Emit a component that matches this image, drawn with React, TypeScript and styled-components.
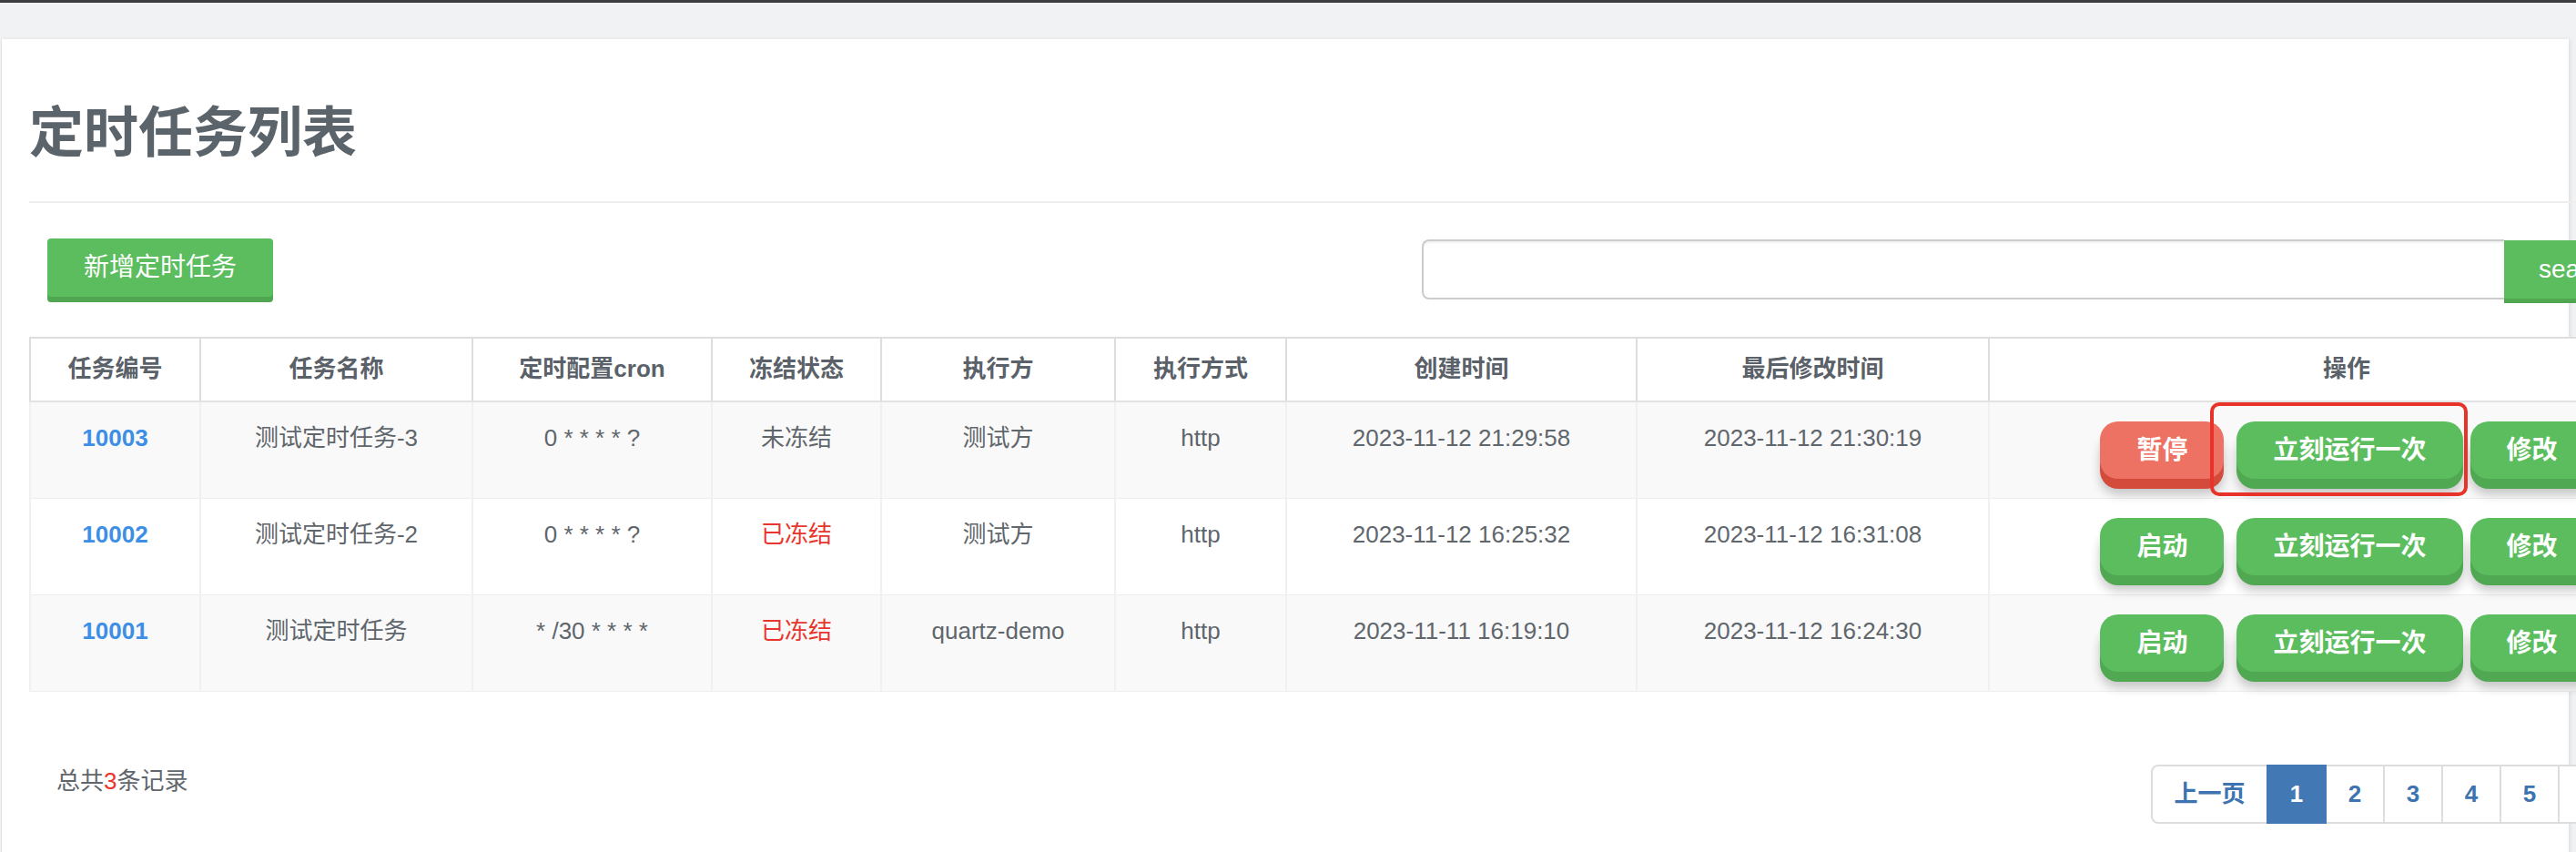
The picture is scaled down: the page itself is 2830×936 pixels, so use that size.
import React from "react";
import styled, { createGlobalStyle } from "styled-components";

const FONT = `"Liberation Sans", "Noto Sans CJK SC", sans-serif`;

const GlobalStyle = createGlobalStyle`
  html, body { margin: 0; padding: 0; overflow: hidden; background: #f1f2f4; }
  body { font-family: ${FONT}; color: #5f666c; }
  * { box-sizing: border-box; }
`;

const Page = styled.div`
  width: 2830px;
  height: 936px;
  overflow: hidden;
  background: #f1f2f4;
  border-top: 3px solid #3b3d41;
  padding: 40px 0 0 1px;
`;

const Panel = styled.div`
  width: 2821px;
  height: 900px;
  background: #fff;
  border-left: 1px solid #e2e3e5;
  box-shadow: 2px 0 4px rgba(0, 0, 0, 0.08);
  padding: 71px 0 0 30px;
`;

const Content = styled.div`
  width: 2938px;
`;

const Title = styled.h1`
  margin: 0;
  font-size: 60px;
  line-height: 66px;
  font-weight: 700;
  color: #5b646b;
`;

const Divider = styled.div`
  height: 2px;
  background: #eeeeee;
  margin-top: 41px;
`;

const Toolbar = styled.div`
  display: flex;
  align-items: flex-start;
  height: 64px;
  margin-top: 39px;
`;

const FlatButton = styled.button`
  height: 64px;
  padding: 0 40px;
  border: none;
  border-radius: 4px;
  background: #5cbd5e;
  box-shadow: 0 6px 0 #51a652;
  color: #fff;
  font: 400 28px/64px ${FONT};
  white-space: nowrap;
`;

const AddButton = styled(FlatButton)`
  margin-left: 20px;
`;

const SearchGroup = styled.div`
  display: flex;
  align-items: flex-start;
  margin-left: auto;
  margin-right: 59px;
  margin-top: 1px;
`;

const SearchInput = styled.input`
  width: 1189px;
  height: 66px;
  border: 2px solid #cccccc;
  border-right: none;
  border-radius: 8px 0 0 8px;
  box-shadow: inset 0 2px 2px rgba(0, 0, 0, 0.06);
  font: 26px ${FONT};
  padding: 0 18px;
  outline: none;
`;

const SearchButton = styled(FlatButton)`
  width: 160px;
  padding: 0;
  margin-top: 1px;
  box-shadow: 0 5px 0 #51a652;
  border-radius: 0 4px 4px 0;
`;

const Table = styled.table`
  margin-top: 44px;
  width: 2938px;
  table-layout: fixed;
  border-collapse: collapse;
  border-top: 2px solid #dddddd;
`;

const Th = styled.th`
  padding: 15px 8px 16px;
  border-left: 2px solid #dddddd;
  border-right: 2px solid #dddddd;
  border-bottom: 2px solid #e2e2e2;
  font: 700 26px/37px ${FONT};
  color: #5a6168;
  text-align: center;
  background: #fff;
`;

const Tr = styled.tr<{ $striped: boolean }>`
  background: ${(p) => (p.$striped ? "#f9f9f9" : "#ffffff")};
`;

const Td = styled.td<{ $tone?: "id" | "red" | "plain" }>`
  padding: 21px 8px 21px;
  border-left: 2px solid #f0f0f0;
  border-right: 2px solid #f0f0f0;
  border-bottom: 1px solid #eeeeee;
  vertical-align: top;
  text-align: center;
  font: ${(p) => (p.$tone === "id" ? 700 : 400)} 26px/37px ${FONT};
  color: ${(p) =>
    p.$tone === "id" ? "#3d8fe6" : p.$tone === "red" ? "#e8352d" : "#5f666c"};
  white-space: nowrap;
`;

const ActionCell = styled.td`
  padding: 21px 16px 21px;
  border-left: 2px solid #f0f0f0;
  border-bottom: 1px solid #eeeeee;
  vertical-align: top;
`;

const Actions = styled.div`
  display: flex;
  justify-content: center;
`;

const ActionButton = styled.button<{ $tone: "green" | "red"; $gap: number }>`
  height: 63px;
  padding: 0 40px;
  margin-right: ${(p) => p.$gap}px;
  border: none;
  border-radius: 20px;
  font: 700 28px/63px ${FONT};
  color: #fff;
  white-space: nowrap;
  background: ${(p) => (p.$tone === "red" ? "#ee7263" : "#5cbd5e")};
  box-shadow: 0 11px 0 ${(p) => (p.$tone === "red" ? "#d44b3b" : "#51a852")},
    0 17px 12px rgba(0, 0, 0, 0.22);
`;

const Marked = styled.span`
  position: relative;
  display: inline-flex;
  margin-right: 8px;
`;

const Annotation = styled.span`
  position: absolute;
  left: -29px;
  right: -5px;
  top: -21px;
  bottom: -19px;
  border: 4px solid #e8332a;
  border-radius: 10px;
  z-index: 3;
`;

const Footer = styled.div`
  display: flex;
  justify-content: space-between;
  align-items: flex-start;
  margin-top: 80px;
  padding: 0 31px 0 30px;
`;

const Total = styled.div`
  font: 400 26px/37px ${FONT};
  color: #5f666c;
`;

const Count = styled.span`
  color: #e8352d;
`;

const Pager = styled.div`
  display: flex;
`;

const PageCell = styled.span<{ $active?: boolean; $wide?: boolean; $first?: boolean; $last?: boolean }>`
  position: relative;
  display: block;
  width: ${(p) => (p.$wide ? 129 : 66)}px;
  height: 65px;
  margin-left: ${(p) => (p.$first ? 0 : -2)}px;
  border: 2px solid ${(p) => (p.$active ? "#4279b4" : "#dddddd")};
  border-radius: ${(p) => (p.$first ? "8px 0 0 8px" : p.$last ? "0 8px 8px 0" : "0")};
  background: ${(p) => (p.$active ? "#4279b4" : "#ffffff")};
  color: ${(p) => (p.$active ? "#ffffff" : "#3d73b0")};
  z-index: ${(p) => (p.$active ? 2 : 1)};
  font: 700 26px/61px ${FONT};
  text-align: center;
`;

const columns = [
  { title: "任务编号", width: 187 },
  { title: "任务名称", width: 299 },
  { title: "定时配置cron", width: 263 },
  { title: "冻结状态", width: 186 },
  { title: "执行方", width: 257 },
  { title: "执行方式", width: 188 },
  { title: "创建时间", width: 385 },
  { title: "最后修改时间", width: 387 },
  { title: "操作", width: 786 },
];

type Row = {
  id: string;
  name: string;
  cron: string;
  frozen: boolean;
  executor: string;
  method: string;
  created: string;
  modified: string;
};

const rows: Row[] = [
  {
    id: "10003",
    name: "测试定时任务-3",
    cron: "0 * * * * ?",
    frozen: false,
    executor: "测试方",
    method: "http",
    created: "2023-11-12 21:29:58",
    modified: "2023-11-12 21:30:19",
  },
  {
    id: "10002",
    name: "测试定时任务-2",
    cron: "0 * * * * ?",
    frozen: true,
    executor: "测试方",
    method: "http",
    created: "2023-11-12 16:25:32",
    modified: "2023-11-12 16:31:08",
  },
  {
    id: "10001",
    name: "测试定时任务",
    cron: "* /30 * * * *",
    frozen: true,
    executor: "quartz-demo",
    method: "http",
    created: "2023-11-11 16:19:10",
    modified: "2023-11-12 16:24:30",
  },
];

export default function App() {
  return (
    <>
      <GlobalStyle />
      <Page>
        <Panel>
          <Content>
            <Title>定时任务列表</Title>
            <Divider />
            <Toolbar>
              <AddButton>新增定时任务</AddButton>
              <SearchGroup>
                <SearchInput type="text" />
                <SearchButton>search</SearchButton>
              </SearchGroup>
            </Toolbar>
            <Table>
              <colgroup>
                {columns.map((c) => (
                  <col key={c.title} style={{ width: c.width }} />
                ))}
              </colgroup>
              <thead>
                <tr>
                  {columns.map((c) => (
                    <Th key={c.title}>{c.title}</Th>
                  ))}
                </tr>
              </thead>
              <tbody>
                {rows.map((r, i) => (
                  <Tr key={r.id} $striped={i % 2 === 0}>
                    <Td $tone="id">{r.id}</Td>
                    <Td>{r.name}</Td>
                    <Td>{r.cron}</Td>
                    <Td $tone={r.frozen ? "red" : "plain"}>{r.frozen ? "已冻结" : "未冻结"}</Td>
                    <Td>{r.executor}</Td>
                    <Td>{r.method}</Td>
                    <Td>{r.created}</Td>
                    <Td>{r.modified}</Td>
                    <ActionCell>
                      <Actions>
                        <ActionButton $tone={r.frozen ? "green" : "red"} $gap={14}>
                          {r.frozen ? "启动" : "暂停"}
                        </ActionButton>
                        {i === 0 ? (
                          <Marked>
                            <ActionButton $tone="green" $gap={0}>
                              立刻运行一次
                            </ActionButton>
                            <Annotation />
                          </Marked>
                        ) : (
                          <ActionButton $tone="green" $gap={8}>
                            立刻运行一次
                          </ActionButton>
                        )}
                        <ActionButton $tone="green" $gap={0}>
                          修改
                        </ActionButton>
                      </Actions>
                    </ActionCell>
                  </Tr>
                ))}
              </tbody>
            </Table>
            <Footer>
              <Total>
                总共<Count>3</Count>条记录
              </Total>
              <Pager>
                <PageCell $wide $first>
                  上一页
                </PageCell>
                <PageCell $active>1</PageCell>
                <PageCell>2</PageCell>
                <PageCell>3</PageCell>
                <PageCell>4</PageCell>
                <PageCell>5</PageCell>
                <PageCell $wide $last>
                  下一页
                </PageCell>
              </Pager>
            </Footer>
          </Content>
        </Panel>
      </Page>
    </>
  );
}
